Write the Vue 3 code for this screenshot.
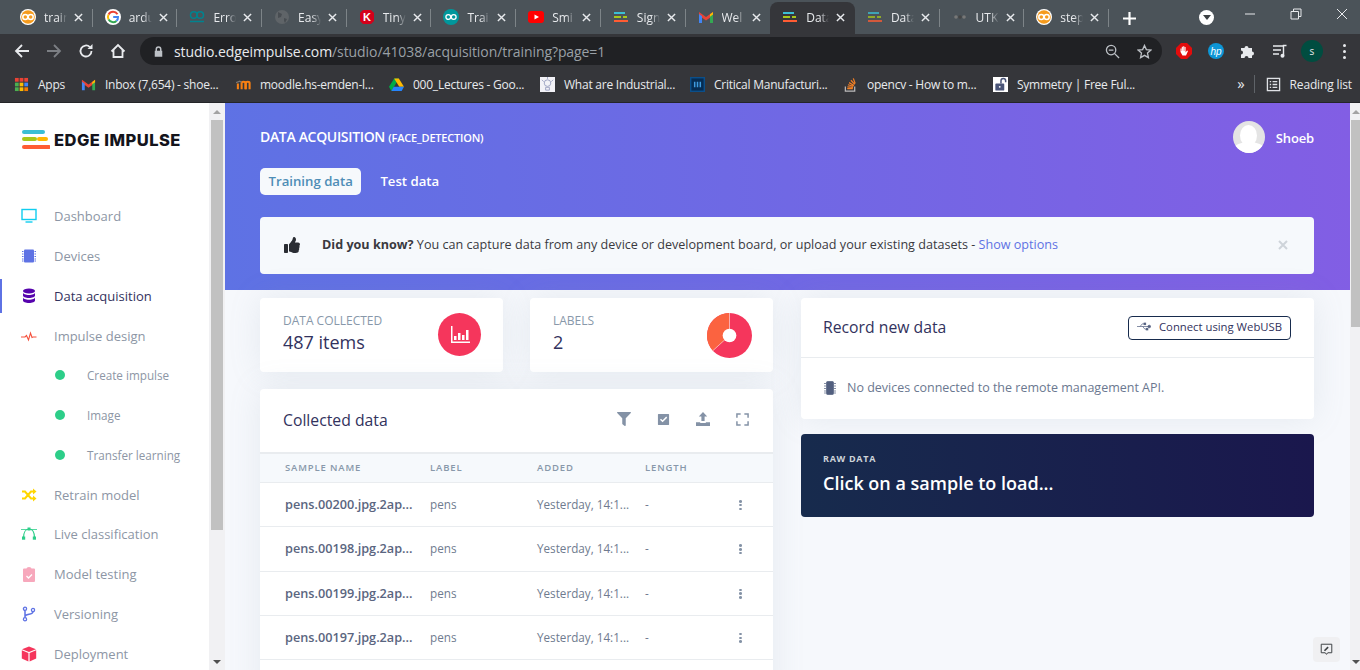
<template>
  <div class="window">
    <!-- browser chrome -->
    <div class="tabstrip">
      <div
        v-for="(t, i) in tabs"
        :key="i"
        :class="{ tab: true, active: t.active, 'no-sep': t.noSep }"
      >
        <svg class="fav" viewBox="0 0 16 16" v-html="icons[t.icon]"></svg>
        <span class="tab-title">{{ t.title }}</span>
        <svg class="tab-x" viewBox="0 0 10 10"><path d="M1 1l8 8M9 1l-8 8" /></svg>
      </div>
      <svg class="newtab" viewBox="0 0 12 12"><path d="M6 0v12M0 6h12" /></svg>
      <div class="strip-right">
        <span class="tabsearch"><i></i></span>
        <svg class="winbtn min" viewBox="0 0 12 12"><path d="M1 6h10" /></svg>
        <svg class="winbtn" viewBox="0 0 12 12"><path d="M1 3.5h7.5V11H1zM3.5 3.5V1H11v7.5H8.5" /></svg>
        <svg class="winbtn" viewBox="0 0 12 12"><path d="M1 1l10 10M11 1L1 11" /></svg>
      </div>
    </div>

    <div class="toolbar">
      <svg class="nav-btn" viewBox="0 0 16 16"><path d="M15 8H2M8 2L2 8l6 6" /></svg>
      <svg class="nav-btn dim" viewBox="0 0 16 16"><path d="M1 8h13M8 2l6 6-6 6" /></svg>
      <svg class="nav-btn" viewBox="0 0 16 16"><path d="M13.5 8a5.5 5.5 0 1 1-1.6-3.9" /><path class="fill" d="M14.5 1v5h-5z" /></svg>
      <svg class="nav-btn" viewBox="0 0 16 16"><path d="M1.5 8.5L8 2l6.500 6.500M3.500 7v7h9V7" /></svg>
      <div class="omnibox">
        <svg class="lock" viewBox="0 0 12 14"><path d="M2 6V4a4 4 0 0 1 8 0v2h1v8H1V6zm2 0h4V4a2 2 0 0 0-4 0z" /></svg>
        <span class="url"><b>studio.edgeimpulse.com</b>/studio/41038/acquisition/training?page=1</span>
        <svg class="omni-icon zoomglass" viewBox="0 0 16 16"><circle cx="6.500" cy="6.500" r="5" /><path d="M10 10l5 5M4 6.500h5" /></svg>
        <svg class="omni-icon" viewBox="0 0 16 16"><path d="M8 1.500l2 4.500 4.800.500-3.600 3.200 1 4.800L8 12.100 3.800 14.500l1-4.800L1.200 6.500 6 6z" /></svg>
      </div>
      <div class="extensions">
        <svg class="ext" viewBox="0 0 16 16" v-html="icons.adblock"></svg>
        <svg class="ext" viewBox="0 0 16 16" v-html="icons.hp"></svg>
        <svg class="ext" viewBox="0 0 16 16" v-html="icons.puzzle"></svg>
        <svg class="ext" viewBox="0 0 16 16" v-html="icons.media"></svg>
        <span class="profile">s</span>
        <span class="kebab"><i></i><i></i><i></i></span>
      </div>
    </div>

    <div class="bookmarks">
      <div v-for="b in bookmarks" :key="b.title" class="bm" :style="{ width: b.width + 'px' }">
        <svg class="bm-icon" viewBox="0 0 16 16" v-html="icons[b.icon]"></svg>
        <span>{{ b.title }}</span>
      </div>
      <div class="bm-right">
        <span class="chev">»</span>
        <span class="bm-sep"></span>
        <svg class="bm-icon" viewBox="0 0 16 16" v-html="icons.reading"></svg>
        <span>Reading list</span>
      </div>
    </div>

    <!-- page -->
    <div class="page">
      <aside class="sidebar">
        <div class="logo">
          <svg class="logo-mark" viewBox="0 0 28 19">
            <path d="M2 2h19" stroke="#3bbfd4" />
            <path d="M2 9h11" stroke="#a8c81a" />
            <path d="M17 9h7" stroke="#ffb800" />
            <path d="M2 17h25" stroke="#ff5c33" />
          </svg>
          <span>EDGE IMPULSE</span>
        </div>
        <nav class="menu">
          <a
            v-for="m in menu"
            :key="m.label"
            :class="{ item: true, sub: m.sub, current: m.current }"
          >
            <span v-if="m.sub" class="dot"></span>
            <svg v-else class="menu-icon" viewBox="0 0 16 16" v-html="icons[m.icon]"></svg>
            {{ m.label }}
          </a>
        </nav>
      </aside>
      <div class="scrollbar side">
        <span class="arrow up"></span>
        <span class="thumb"></span>
        <span class="track"></span>
        <span class="arrow down"></span>
      </div>

      <main class="main">
        <header class="hero">
          <div class="hero-top">
            <h1>DATA ACQUISITION <small>(FACE_DETECTION)</small></h1>
            <div class="user">
              <span class="avatar"><i></i><b></b></span>
              <span class="user-name">Shoeb</span>
            </div>
          </div>
          <div class="pills">
            <span class="pill on">Training data</span>
            <span class="pill">Test data</span>
          </div>
          <div class="alert">
            <svg class="thumbup" viewBox="0 0 512 512"><path d="M104 224H24c-13.255 0-24 10.745-24 24v240c0 13.255 10.745 24 24 24h80c13.255 0 24-10.745 24-24V248c0-13.255-10.745-24-24-24zM384 81.452c0 42.416-25.97 66.208-33.277 94.548h101.723c33.397 0 59.397 27.746 59.553 58.098.084 17.938-7.546 37.249-19.439 49.197l-.11.11c9.836 23.337 8.237 56.037-9.308 79.469 8.681 25.895-.069 57.704-16.382 74.757 4.298 17.598 2.244 32.575-6.148 44.632C440.202 511.587 389.616 512 346.839 512l-2.845-.001c-48.287-.017-87.806-17.598-119.56-31.725-15.957-7.099-36.821-15.887-52.651-16.178-6.54-.12-11.783-5.457-11.783-11.998v-213.77c0-3.2 1.282-6.271 3.558-8.521 39.614-39.144 56.648-80.587 89.117-113.111 14.804-14.832 20.188-37.236 25.393-58.902C282.515 39.293 291.817 0 312 0c24 0 72 8 72 81.452z" /></svg>
            <p><strong>Did you know?</strong> You can capture data from any device or development board, or upload your existing datasets - <a>Show options</a></p>
            <svg class="alert-x" viewBox="0 0 10 10"><path d="M1 1l8 8M9 1l-8 8" /></svg>
          </div>
        </header>

        <div class="columns">
          <div class="col">
            <div class="stats">
              <div class="card stat">
                <div class="stat-text">
                  <div class="stat-label">DATA COLLECTED</div>
                  <div class="stat-value">487 items</div>
                </div>
                <span class="stat-circle">
                  <svg viewBox="0 0 20 18"><path d="M1 0h1.500v15.500H20V17H1z" /><path d="M4 10h2.500v4H4zM8 7h2.500v7H8zM12 9h2.500v5H12zM16 4h2.500v10H16z" /></svg>
                </span>
              </div>
              <div class="card stat">
                <div class="stat-text">
                  <div class="stat-label">LABELS</div>
                  <div class="stat-value">2</div>
                </div>
                <svg class="pie" viewBox="0 0 46 46">
                  <circle cx="23" cy="23" r="23" fill="#f5365c" />
                  <path d="M23 23V0A23 23 0 0 0 6 38.500z" fill="#fb6340" />
                  <path d="M23 23V0M23 23L6 38.500" stroke="#fff" stroke-opacity=".55" stroke-width="1" />
                  <circle cx="23" cy="23" r="7" fill="#fff" />
                </svg>
              </div>
            </div>

            <section class="card collected">
              <div class="collected-head">
                <h3>Collected data</h3>
                <div class="tools">
                  <svg viewBox="0 0 512 512"><path d="M487.976 0H24.028C2.71 0-8.047 25.866 7.058 40.971L192 225.941V432c0 7.831 3.821 15.170 10.237 19.662l80 55.980C298.020 518.690 320 507.493 320 487.980V225.941l184.947-184.970C520.021 25.896 509.338 0 487.976 0z" /></svg>
                  <svg class="small" viewBox="0 0 14 14"><path fill-rule="evenodd" d="M1.500 1h11a.5.5 0 0 1 .5.5v11a.5.5 0 0 1-.5.5h-11a.5.5 0 0 1-.5-.5v-11a.5.5 0 0 1 .5-.5zM3.200 7.200l2.800 2.800 5-5-1.100-1.100L6 7.800 4.300 6.100z" /></svg>
                  <svg viewBox="0 0 14 14"><path d="M7 0l4.200 4.500H8.600V9H5.400V4.500H2.800zM0 10.200h4.200v.8h5.600v-.8H14V14H0z" /></svg>
                  <svg class="expand" viewBox="0 0 14 14"><path d="M1 5V1h4M9 1h4v4M13 9v4H9M5 13H1V9" /></svg>
                </div>
              </div>
              <div class="table-head row">
                <span class="c-name">SAMPLE NAME</span>
                <span class="c-label">LABEL</span>
                <span class="c-added">ADDED</span>
                <span class="c-len">LENGTH</span>
              </div>
              <div v-for="s in samples" :key="s" class="row sample">
                <span class="c-name name">{{ s }}</span>
                <span class="c-label">pens</span>
                <span class="c-added">Yesterday, 14:1...</span>
                <span class="c-len">-</span>
                <span class="more"><i></i><i></i><i></i></span>
              </div>
            </section>
          </div>

          <div class="col right">
            <section class="card record">
              <div class="record-head">
                <h3>Record new data</h3>
                <button class="usb-btn">
                  <svg viewBox="0 0 16 10"><path d="M0 5h13M3.500 5L6 2h2.500M6.500 5L9 8h2" /><circle cx="14" cy="5" r="1.500" /><rect x="8" y="1" width="2" height="2" /><rect x="10.500" y="7" width="2" height="2" /></svg>
                  Connect using WebUSB
                </button>
              </div>
              <div class="record-body">
                <svg class="chip" viewBox="0 0 12 14"><rect x="2.500" y="0.500" width="7" height="13" rx="1" /><path d="M0 2.500h2M0 5h2M0 7.500h2M0 10h2M0 12h2M10 2.500h2M10 5h2M10 7.500h2M10 10h2M10 12h2" /></svg>
                No devices connected to the remote management API.
              </div>
            </section>
            <section class="raw">
              <div class="raw-label">RAW DATA</div>
              <div class="raw-title">Click on a sample to load...</div>
            </section>
          </div>
        </div>

        <div class="feedback">
          <svg viewBox="0 0 16 16"><path d="M1.500 1.500h13v10.500H9.500L8 14l-1.500-2h-5z" /><path class="pen" d="M5.500 9.500l4.500-4.500" /></svg>
        </div>
      </main>

      <div class="scrollbar pagebar">
        <span class="arrow up"></span>
        <span class="thumb"></span>
        <span class="track"></span>
        <span class="arrow down"></span>
      </div>
    </div>
  </div>
</template>

<script setup>
const eiBars = '<path d="M1 4h11" stroke="#3bbfd4" stroke-width="2"/><path d="M1 8h7M10 8h4" stroke="#a8c81a" stroke-width="2"/><path d="M1 12h14" stroke="#ff5c33" stroke-width="2"/>'
const gmail = '<path d="M1 3l7 5 7-5v3.500l-7 5-7-5z" fill="#ea4335"/><path d="M1 5v9h3V7.200z" fill="#4285f4"/><path d="M15 5v9h-3V7.200z" fill="#34a853"/><path d="M12 5.200L15 3v2.500l-3 2.200z" fill="#fbbc04"/>'

const icons = {
  ei: eiBars,
  eidim: '<g opacity=".75">' + eiBars + '</g>',
  gmail,
  ardorange: '<circle cx="8" cy="8" r="8" fill="#fff"/><circle cx="8" cy="8" r="6.800" fill="#f59b1d"/><circle cx="5.300" cy="8" r="2.500" fill="none" stroke="#fff" stroke-width="1.500"/><circle cx="10.700" cy="8" r="2.500" fill="none" stroke="#fff" stroke-width="1.500"/>',
  google: '<circle cx="8" cy="8" r="8" fill="#fff"/><path d="M12.500 5.200A5.200 5.200 0 0 0 3.600 5.400" fill="none" stroke="#ea4335" stroke-width="2"/><path d="M3.600 5.400a5.200 5.200 0 0 0 0 5.200" fill="none" stroke="#fbbc04" stroke-width="2"/><path d="M3.600 10.600a5.200 5.200 0 0 0 7.900 1.300" fill="none" stroke="#34a853" stroke-width="2"/><path d="M11.500 11.900A5 5 0 0 0 13 8H8.200" fill="none" stroke="#4285f4" stroke-width="2"/>',
  ardteal: '<circle cx="4.800" cy="6" r="3.300" fill="none" stroke="#00838f" stroke-width="1.500"/><circle cx="11.200" cy="6" r="3.300" fill="none" stroke="#00838f" stroke-width="1.500"/><path d="M1 12.500h14" stroke="#00838f" stroke-width="1.500"/>',
  globe: '<circle cx="8" cy="8" r="7" fill="#5f6468"/><path d="M4 3l4 2-1 3-3 1zM10 9l3 1-2 4-1-2z" fill="#484d52"/>',
  ktiny: '<path d="M4 1h8l3 3v8l-3 3H4l-3-3V4z" fill="#d4001a"/><text x="8" y="12" font-size="11" font-weight="700" font-family="Liberation Sans" fill="#fff" text-anchor="middle">K</text>',
  ardcircle: '<circle cx="8" cy="8" r="8" fill="#00979c"/><circle cx="5.300" cy="8" r="2.400" fill="none" stroke="#fff" stroke-width="1.300"/><circle cx="10.700" cy="8" r="2.400" fill="none" stroke="#fff" stroke-width="1.300"/>',
  youtube: '<rect y="2" width="16" height="12" rx="3" fill="#f00"/><path d="M6.500 5.500v5L11 8z" fill="#fff"/>',
  utk: '<circle cx="4" cy="8" r="1.800" fill="#777"/><circle cx="8" cy="8" r="1.800" fill="#444"/><circle cx="12" cy="8" r="1.800" fill="#777"/>',
  apps: '<path fill="#ea4335" d="M1 1h4v4H1z"/><path fill="#ea4335" d="M6 1h4v4H6z"/><path fill="#ea4335" d="M11 1h4v4h-4z"/><path fill="#4caf50" d="M1 6h4v4H1z"/><path fill="#fbbc04" d="M6 6h4v4H6z"/><path fill="#4285f4" d="M11 6h4v4h-4z"/><path fill="#4caf50" d="M1 11h4v4H1z"/><path fill="#fbbc04" d="M6 11h4v4H6z"/><path fill="#f57c00" d="M11 11h4v4h-4z"/>',
  moodle: '<path d="M2 13V7M6 13V6.500q0-1.500 2-1.500t2 1.500V13" fill="none" stroke="#f98012" stroke-width="2.200"/><path d="M10.500 13V6.500q0-1.500 2-1.500t2 1.500V13" fill="none" stroke="#f98012" stroke-width="2.200"/><path d="M0 6l4-1.500 2 1" fill="none" stroke="#777" stroke-width="1.200"/>',
  drive: '<path d="M5.500 1.500h5L5 11l-2.500 4L0 10.500z" fill="#00ac47"/><path d="M10.500 1.500L16 10.500h-5L5.500 1.500z" fill="#ffba00"/><path d="M2.500 15L5 10.500h11L13.500 15z" fill="#2684fc"/>',
  industrial: '<rect width="16" height="16" fill="#f2f2f7"/><circle cx="8" cy="6.500" r="3.500" fill="none" stroke="#9da3c2"/><path d="M6 11h4v3H6zM2 3l2 2M14 3l-2 2M8 0v2" stroke="#9da3c2" fill="none"/>',
  critical: '<rect width="16" height="16" fill="#0b4f8a"/><rect x="1.500" y="1.500" width="13" height="13" fill="#062c52"/><path d="M5 5v6M8 5v6M11 5v6" stroke="#3f9ce0" stroke-width="1.600"/>',
  stack: '<path d="M2.500 10v5h10v-5" fill="none" stroke="#bcbbbb" stroke-width="1.300"/><path d="M4.500 12.500h6M4.700 10.500l6 .5M5.300 8.300l5.800 1.600M6.500 6l5.200 3M8.500 3.500l4 4.300M11 1.500l2 5.500" stroke="#f48024" stroke-width="1.300"/>',
  symmetry: '<rect width="16" height="16" fill="#fff"/><rect x="2.500" y="7" width="9.500" height="7.500" rx="1" fill="#4a5578"/><path d="M8.500 7V4a2.500 2.500 0 0 1 5 0v1.500" fill="none" stroke="#4a5578" stroke-width="1.600"/><circle cx="7.200" cy="10.500" r="1" fill="#fff"/>',
  reading: '<rect x="1.500" y="1.500" width="13" height="13" fill="none" stroke="#dfe1e5" stroke-width="1.400"/><path d="M4 5h1.500M7 5h5M4 8h1.500M7 8h5M4 11h1.500M7 11h5" stroke="#dfe1e5" stroke-width="1.400"/>',
  adblock: '<path d="M5 0h6l5 5v6l-5 5H5l-5-5V5z" fill="#e30c0c"/><path d="M4.500 8V5.500h1V8h.3V3.800h1.100V8h.3V3.200h1.100V8h.3V4h1v5.500l1.400-2 1 .6-2 4.400H6.500L4.500 9z" fill="#fff"/>',
  hp: '<circle cx="8" cy="8" r="8" fill="#0d96d6"/><text x="8" y="11.500" font-size="10" font-style="italic" font-family="Liberation Sans" fill="#fff" text-anchor="middle">hp</text>',
  puzzle: '<path d="M1 5h3.500a2 2 0 1 1 4 0H12v3.500a2 2 0 1 1 0 4V15H8.500a2 2 0 1 0-4 0H1v-3.500a2 2 0 1 0 0-4z" fill="#e8eaed"/>',
  media: '<path d="M1 3h10M1 7h8M1 11h6" stroke="#e8eaed" stroke-width="1.400"/><path d="M11.500 12.500V2.500h3" fill="none" stroke="#e8eaed" stroke-width="1.400"/><circle cx="10.500" cy="12.800" r="2" fill="#e8eaed"/>',
  monitor: '<rect x="1" y="1.500" width="14" height="10" fill="none" stroke="#11cdef" stroke-width="1.400"/><path d="M4.500 14h7" stroke="#11cdef" stroke-width="1.400"/>',
  chip: '<rect x="3" y="1.500" width="10" height="13" rx="1" fill="#5e72e4"/><path d="M1 3.500h1.500M1 6h1.500M1 8.500h1.500M1 11h1.500M1 13h1.500M13.500 3.500H15M13.500 6H15M13.500 8.500H15M13.500 11H15M13.500 13H15" stroke="#5e72e4" stroke-width="1"/>',
  database: '<ellipse cx="8" cy="3" rx="6" ry="2.500" fill="#5603ad"/><path d="M2 4.500v3c0 1.400 2.700 2.500 6 2.500s6-1.100 6-2.500v-3C14 6 11.300 7 8 7S2 6 2 4.500z" fill="#5603ad"/><path d="M2 9.200v3.300C2 13.900 4.700 15 8 15s6-1.100 6-2.500V9.200c0 1.500-2.700 2.500-6 2.500s-6-1-6-2.500z" fill="#5603ad"/>',
  pulse: '<path d="M0 9h4l1.500-1.500 2 4.500 2-7 1.500 4.500 1-.5h3.500" fill="none" stroke="#f5503c" stroke-width="1.100"/>',
  shuffle: '<path d="M1 4.500h3l6 7h2M1 11.500h3l6-7h2" fill="none" stroke="#ffd600" stroke-width="2"/><path d="M12 1.500l3.500 3-3.500 3zM12 8.500l3.500 3-3.500 3z" fill="#ffd600"/>',
  bezier: '<path d="M2.500 12C2.500 6 5 3 8 3s5.500 3 5.500 9" fill="none" stroke="#2dce89" stroke-width="1.200"/><path d="M0 3.500h16" stroke="#2dce89" stroke-width=".8"/><rect x="6.500" y="1.500" width="3" height="3" fill="#2dce89"/><rect x="1" y="10.500" width="3.200" height="3.200" fill="#2dce89"/><rect x="11.800" y="10.500" width="3.200" height="3.200" fill="#2dce89"/>',
  clipboard: '<path d="M3 2.500h2.500a2.500 1.500 0 0 1 5 0H13a1 1 0 0 1 1 1V15a1 1 0 0 1-1 1H3a1 1 0 0 1-1-1V3.500a1 1 0 0 1 1-1z" fill="#f7a8bc"/><path d="M5.500 10l2 2 3.500-3.500" fill="none" stroke="#fff" stroke-width="1.300"/>',
  branch: '<circle cx="4" cy="2.800" r="1.600" fill="none" stroke="#5e72e4" stroke-width="1.300"/><circle cx="4" cy="13.200" r="1.600" fill="none" stroke="#5e72e4" stroke-width="1.300"/><circle cx="12" cy="4" r="1.600" fill="none" stroke="#5e72e4" stroke-width="1.300"/><path d="M4 4.500v7M4 10.500c0-1.500 2-2 4-2.300s4-1 4-2.700" fill="none" stroke="#5e72e4" stroke-width="1.500"/>',
  cube: '<path d="M8 .5l7 2.700L8 6 1 3.200z" fill="#f5365c"/><path d="M.8 4.300L7.400 7v8.500L.8 12.500z" fill="#f5365c"/><path d="M15.200 4.300L8.600 7v8.500l6.600-3z" fill="#f5365c"/>'
}

const tabs = [
  { title: 'training', icon: 'ardorange' },
  { title: 'arduino', icon: 'google' },
  { title: 'Error', icon: 'ardteal' },
  { title: 'Easy', icon: 'globe' },
  { title: 'Tiny', icon: 'ktiny' },
  { title: 'Train', icon: 'ardcircle' },
  { title: 'Smi', icon: 'youtube' },
  { title: 'Sign', icon: 'ei' },
  { title: 'Wel', icon: 'gmail', noSep: true },
  { title: 'Data', icon: 'ei', active: true, noSep: true },
  { title: 'Data', icon: 'eidim' },
  { title: 'UTK', icon: 'utk' },
  { title: 'steps', icon: 'ardorange' }
]

const bookmarks = [
  { title: 'Apps', icon: 'apps', width: 67 },
  { title: 'Inbox (7,654) - shoe...', icon: 'gmail', width: 155 },
  { title: 'moodle.hs-emden-l...', icon: 'moodle', width: 153 },
  { title: '000_Lectures - Goo...', icon: 'drive', width: 151 },
  { title: 'What are Industrial...', icon: 'industrial', width: 150 },
  { title: 'Critical Manufacturi...', icon: 'critical', width: 153 },
  { title: 'opencv - How to m...', icon: 'stack', width: 150 },
  { title: 'Symmetry | Free Ful...', icon: 'symmetry', width: 150 }
]

const menu = [
  { label: 'Dashboard', icon: 'monitor' },
  { label: 'Devices', icon: 'chip' },
  { label: 'Data acquisition', icon: 'database', current: true },
  { label: 'Impulse design', icon: 'pulse' },
  { label: 'Create impulse', sub: true },
  { label: 'Image', sub: true },
  { label: 'Transfer learning', sub: true },
  { label: 'Retrain model', icon: 'shuffle' },
  { label: 'Live classification', icon: 'bezier' },
  { label: 'Model testing', icon: 'clipboard' },
  { label: 'Versioning', icon: 'branch' },
  { label: 'Deployment', icon: 'cube' }
]

const samples = [
  'pens.00200.jpg.2ap...',
  'pens.00198.jpg.2ap...',
  'pens.00199.jpg.2ap...',
  'pens.00197.jpg.2ap...',
  'pens.00196.jpg.2ap...'
]
</script>

<style>
html, body {
  margin: 0;
  overflow: hidden;
}
</style>

<style scoped>
.window {
  width: 1360px;
  height: 670px;
  display: flex;
  flex-direction: column;
  overflow: hidden;
  font-family: "Open Sans", "Noto Sans", sans-serif;
}

/* ---------- chrome ---------- */
.tabstrip {
  height: 34px;
  flex: none;
  background: #4b5359;
  display: flex;
  align-items: flex-end;
  padding-left: 8px;
}
.tab {
  width: 84.7px;
  height: 32px;
  flex: none;
  display: flex;
  align-items: center;
  padding: 0 10px 2px 12px;
  box-sizing: border-box;
  color: #e8eaed;
  font-size: 12px;
  position: relative;
  border-radius: 8px 8px 0 0;
}
.tab::after {
  content: "";
  position: absolute;
  right: 0;
  top: 7px;
  height: 18px;
  width: 1px;
  background: #7d8488;
}
.tab.no-sep::after {
  display: none;
}
.tab.active {
  background: #35363a;
}
.fav {
  width: 16px;
  height: 16px;
  flex: none;
}
.tab-title {
  margin-left: 8px;
  width: 23px;
  flex: none;
  overflow: hidden;
  white-space: nowrap;
  -webkit-mask-image: linear-gradient(90deg, #000 60%, transparent);
  mask-image: linear-gradient(90deg, #000 60%, transparent);
}
.tab-x {
  width: 9px;
  height: 9px;
  margin-left: 7px;
  flex: none;
  fill: none;
  stroke: #e8eaed;
  stroke-width: 1.6;
}
.newtab {
  width: 13px;
  height: 13px;
  margin: 0 0 9px 14px;
  fill: none;
  stroke: #fff;
  stroke-width: 2;
}
.strip-right {
  margin-left: auto;
  height: 34px;
  display: flex;
  align-items: center;
  padding-right: 12px;
}
.tabsearch {
  width: 15px;
  height: 15px;
  border-radius: 50%;
  background: #fff;
  display: flex;
  align-items: center;
  justify-content: center;
  margin-right: 30px;
}
.tabsearch i {
  border: 4px solid transparent;
  border-top: 5px solid #3c4043;
  border-bottom: 0;
}
.winbtn {
  width: 12px;
  height: 12px;
  margin-left: 34px;
  fill: none;
  stroke: #e8eaed;
  stroke-width: 1;
  margin-top: -7px;
}
.winbtn.min {
  margin-left: 0;
}

.toolbar {
  height: 34px;
  flex: none;
  background: #35363a;
  display: flex;
  align-items: center;
  padding-left: 14px;
  color: #e8eaed;
}
.nav-btn {
  width: 16px;
  height: 16px;
  flex: none;
  fill: none;
  stroke: #e8eaed;
  stroke-width: 1.8;
  margin-right: 16px;
}
.nav-btn.dim {
  stroke: #7c7f84;
}
.nav-btn .fill {
  fill: #e8eaed;
  stroke: none;
}
.omnibox {
  width: 1022px;
  height: 28px;
  margin-left: -2px;
  background: #202124;
  border-radius: 14px;
  display: flex;
  align-items: center;
  flex: none;
  box-sizing: border-box;
  padding: 0 10px 0 14px;
}
.lock {
  width: 9px;
  height: 11px;
  fill: #bdc1c6;
  flex: none;
}
.url {
  margin-left: 11px;
  font-size: 14px;
  color: #9aa0a6;
  white-space: nowrap;
  letter-spacing: -0.08px;
}
.url b {
  font-weight: 400;
  color: #e8eaed;
}
.omni-icon {
  width: 15px;
  height: 15px;
  fill: none;
  stroke: #bdc1c6;
  stroke-width: 1.4;
  flex: none;
  margin-left: 17px;
}
.zoomglass {
  margin-left: auto;
}
.extensions {
  display: flex;
  align-items: center;
  padding-left: 14px;
}
.ext {
  width: 16px;
  height: 16px;
  flex: none;
  margin-right: 16px;
}
.profile {
  width: 22px;
  height: 22px;
  border-radius: 50%;
  background: #004d40;
  color: #e8eaed;
  font-size: 10px;
  display: flex;
  align-items: center;
  justify-content: center;
  margin-left: -3px;
  flex: none;
}
.kebab {
  display: flex;
  flex-direction: column;
  gap: 3px;
  margin-left: 20px;
}
.kebab i {
  width: 3px;
  height: 3px;
  border-radius: 50%;
  background: #e8eaed;
}

.bookmarks {
  height: 35px;
  flex: none;
  box-sizing: border-box;
  background: #35363a;
  border-bottom: 1px solid #242528;
  display: flex;
  align-items: center;
  padding: 0 0 2px 14px;
  color: #e8eaed;
  font-size: 12px;
  white-space: nowrap;
  letter-spacing: -0.24px;
}
.bm {
  display: flex;
  align-items: center;
  flex: none;
}
.bm-icon {
  width: 15px;
  height: 15px;
  flex: none;
  margin-right: 9px;
}
.bm-right {
  margin-left: auto;
  display: flex;
  align-items: center;
  padding-right: 8px;
  letter-spacing: -0.15px;
}
.chev {
  font-size: 15px;
  margin-top: -3px;
  margin-right: 9px;
}
.bm-sep {
  width: 1px;
  height: 18px;
  background: #5f6368;
  margin-right: 11px;
}

/* ---------- page ---------- */
.page {
  flex: 1;
  min-height: 0;
  display: flex;
  background: #f6f8fc;
}
.sidebar {
  width: 209px;
  flex: none;
  background: #fff;
  overflow: hidden;
}
.logo {
  height: 93.6px;
  display: flex;
  align-items: center;
  box-sizing: border-box;
  padding: 0 0 20px 22px;
  font-family: Inter, "Liberation Sans", sans-serif;
  font-weight: 800;
  font-size: 16.5px;
  letter-spacing: 0.45px;
  color: #14141c;
  white-space: nowrap;
}
.logo-mark {
  width: 28px;
  height: 19px;
  fill: none;
  stroke-width: 4;
  stroke-linecap: round;
  margin-right: 4px;
  flex: none;
}
.menu {
  display: flex;
  flex-direction: column;
}
.item {
  height: 39.75px;
  flex: none;
  display: flex;
  align-items: center;
  box-sizing: border-box;
  padding-left: 21px;
  font-size: 13px;
  color: #8d96a5;
  white-space: nowrap;
  position: relative;
}
.item.current {
  color: #32325d;
}
.item.current::before {
  content: "";
  position: absolute;
  left: 0;
  top: 3px;
  bottom: 3px;
  width: 2px;
  background: #5e72e4;
}
.menu-icon {
  width: 16px;
  height: 16px;
  flex: none;
  margin-right: 17px;
}
.item.sub {
  font-size: 11.7px;
  padding-left: 55px;
}
.dot {
  width: 10px;
  height: 10px;
  border-radius: 50%;
  background: #2dce89;
  margin-right: 22px;
  flex: none;
}

.scrollbar {
  flex: none;
  background: #f1f1f3;
  display: flex;
  flex-direction: column;
}
.scrollbar.side {
  width: 16px;
  box-sizing: border-box;
  padding: 0 1px 0 1px;
}
.arrow {
  height: 17px;
  flex: none;
  display: flex;
  align-items: center;
  justify-content: center;
}
.arrow::before {
  content: "";
  border: 4px solid transparent;
}
.arrow.up::before {
  border-top: 0;
  border-bottom: 4px solid #a3a3a3;
}
.arrow.down::before {
  border-bottom: 0;
  border-top: 4px solid #505050;
}
.thumb {
  background: #c1c1c1;
  flex: none;
}
.track {
  flex: 1;
}
.side .thumb {
  height: 410px;
  margin: 0 1px;
}
.pagebar {
  width: 10px;
  padding-left: 1px;
  box-sizing: border-box;
}
.pagebar .arrow {
  justify-content: flex-start;
  padding-left: 1px;
}
.pagebar .thumb {
  height: 207px;
}

.main {
  flex: 1;
  min-width: 0;
  overflow: hidden;
  position: relative;
}
.hero {
  height: 187px;
  box-sizing: border-box;
  padding: 18px 36px 0 35px;
  background: linear-gradient(87deg, #5e72e4 0, #825ee4 100%);
  color: #fff;
}
.hero-top {
  display: flex;
  justify-content: space-between;
  align-items: center;
  height: 32px;
}
h1 {
  margin: -2px 0 0;
  font-size: 14px;
  font-weight: 600;
  letter-spacing: -0.33px;
}
h1 small {
  font-size: 11px;
  letter-spacing: -0.2px;
}
.user {
  display: flex;
  align-items: center;
  gap: 11px;
  font-size: 13px;
  font-weight: 600;
}
.user-name {
  padding-top: 2px;
  letter-spacing: -0.15px;
}
.avatar {
  width: 32px;
  height: 32px;
  border-radius: 50%;
  background: #e4e4e4;
  overflow: hidden;
  display: flex;
  flex-direction: column;
  align-items: center;
}
.avatar i {
  width: 17px;
  height: 21px;
  border-radius: 50%;
  background: #fff;
  margin-top: 4px;
  flex: none;
}
.avatar b {
  width: 30px;
  height: 14px;
  border-radius: 50%;
  background: #fff;
  margin-top: -4px;
  flex: none;
}
.pills {
  display: flex;
  align-items: center;
  margin-top: 15px;
  gap: 19px;
}
.pill {
  height: 27px;
  box-sizing: border-box;
  padding-bottom: 2px;
  display: flex;
  align-items: center;
  font-size: 13.2px;
  font-weight: 600;
  color: #fff;
}
.pill.on {
  background: #f6f9fc;
  color: #4e8db6;
  border-radius: 5px;
  padding: 0 8.500px 2px;
}
.alert {
  margin-top: 22px;
  height: 57px;
  box-sizing: border-box;
  background: #f6f9fc;
  border-radius: 4px;
  display: flex;
  align-items: center;
  padding: 0 26px 2px 24px;
  color: #3a3a3f;
  font-size: 12.6px;
}
.thumbup {
  width: 16px;
  height: 16px;
  fill: #2a2d33;
  flex: none;
  margin-right: 22px;
}
.alert p {
  margin: 0;
  flex: 1;
}
.alert strong {
  font-weight: 700;
}
.alert a {
  color: #5e72e4;
}
.alert-x {
  width: 10px;
  height: 10px;
  fill: none;
  stroke: #ced4da;
  stroke-width: 2;
  flex: none;
}

.columns {
  display: grid;
  grid-template-columns: 513px 513px;
  gap: 28px;
  padding: 8px 0 0 35px;
}
.col {
  display: flex;
  flex-direction: column;
  gap: 17px;
}
.col.right {
  gap: 15px;
}
.card {
  background: #fff;
  border-radius: 4px;
  box-shadow: 0 0 32px rgba(136, 152, 170, 0.15);
}
.stats {
  display: grid;
  grid-template-columns: 243px 243px;
  gap: 27px;
}
.stat {
  height: 74px;
  box-sizing: border-box;
  padding: 13px 22px 0 23px;
  display: flex;
  justify-content: space-between;
}
.stat-text {
  padding-top: 1px;
}
.stat-label {
  font-size: 12px;
  color: #8898aa;
  line-height: 18px;
}
.stat-value {
  font-size: 18px;
  font-weight: 500;
  color: #32325d;
  line-height: 24px;
}
.stat-circle {
  width: 43px;
  height: 43px;
  border-radius: 50%;
  background: #f5365c;
  display: flex;
  align-items: center;
  justify-content: center;
  margin-top: 2px;
}
.stat-circle svg {
  width: 20px;
  height: 18px;
  fill: #fff;
}
.pie {
  width: 45px;
  height: 45px;
  margin: 2px -1px 0 0;
}

h3 {
  margin: -2px 0 0;
  font-size: 15.75px;
  font-weight: 500;
  color: #32325d;
}
.collected-head {
  height: 63px;
  display: flex;
  align-items: center;
  justify-content: space-between;
  padding: 0 24px 0 23px;
}
.tools {
  display: flex;
  align-items: center;
  gap: 26px;
  margin-top: -3px;
}
.tools svg {
  width: 14px;
  height: 14px;
  fill: #8492a6;
}
.tools .small {
  width: 13px;
  height: 13px;
}
.tools .expand {
  width: 13px;
  height: 13px;
  fill: none;
  stroke: #8492a6;
  stroke-width: 1.6;
}
.row {
  display: grid;
  grid-template-columns: 145px 107px 108px 1fr;
  padding-left: 25px;
  align-items: center;
  position: relative;
}
.table-head {
  height: 31px;
  box-sizing: border-box;
  background: #f6f9fc;
  border-top: 2px solid #e9ecef;
  border-bottom: 1px solid #e9ecef;
  padding-bottom: 2px;
  font-size: 9.5px;
  font-weight: 600;
  letter-spacing: 0.85px;
  color: #8898aa;
}
.sample {
  height: 44.3px;
  box-sizing: border-box;
  border-bottom: 1px solid #e9ecef;
  padding-bottom: 1px;
  font-size: 11.7px;
  color: #6f7b8f;
}
.name {
  font-size: 12.7px;
  font-weight: 600;
  color: #5a6580;
  white-space: nowrap;
}
.more {
  position: absolute;
  right: 31px;
  top: 17px;
  display: flex;
  flex-direction: column;
  gap: 1.3px;
}
.more i {
  width: 3px;
  height: 2.5px;
  border-radius: 50%;
  background: #8492a6;
}

.record {
  height: 121px;
}
.record-head {
  height: 59px;
  display: flex;
  align-items: center;
  justify-content: space-between;
  padding: 0 23px 0 22px;
  border-bottom: 1px solid #e9ecef;
}
.usb-btn {
  width: 163px;
  height: 24px;
  box-sizing: border-box;
  background: #fff;
  border: 1px solid #172b4d;
  border-radius: 4px;
  color: #32325d;
  font-family: inherit;
  font-size: 11.3px;
  font-weight: 500;
  display: flex;
  align-items: center;
  justify-content: center;
  gap: 8px;
  padding: 0 0 2px;
  white-space: nowrap;
}
.usb-btn svg {
  width: 14px;
  height: 9px;
  fill: #525f7f;
  stroke: #525f7f;
  stroke-width: 0.8;
}
.usb-btn svg path {
  fill: none;
}
.record-body {
  height: 61px;
  display: flex;
  align-items: center;
  padding: 0 0 2px 23px;
  box-sizing: border-box;
  font-size: 12.5px;
  color: #6b7890;
}
.chip {
  width: 12px;
  height: 14px;
  flex: none;
  margin-right: 11px;
  fill: #525f7f;
  stroke: #525f7f;
  stroke-width: 0.7;
}
.raw {
  height: 83px;
  box-sizing: border-box;
  padding: 18px 22px 0;
  border-radius: 4px;
  background: linear-gradient(87deg, #172b4d 0, #1a174d 100%);
  color: #fff;
}
.raw-label {
  font-size: 9px;
  font-weight: 700;
  letter-spacing: 0.7px;
  color: #ced4da;
  line-height: 14px;
}
.raw-title {
  font-size: 18px;
  font-weight: 600;
  line-height: 24px;
  margin-top: 5px;
}
.feedback {
  position: absolute;
  right: 10px;
  bottom: 8px;
  width: 27px;
  height: 25px;
  background: #f0f0f2;
  border-radius: 4px;
  display: flex;
  align-items: center;
  justify-content: center;
}
.feedback svg {
  width: 13px;
  height: 13px;
  fill: none;
  stroke: #3c4043;
  stroke-width: 1.2;
}
.feedback .pen {
  stroke-width: 2;
}
</style>
